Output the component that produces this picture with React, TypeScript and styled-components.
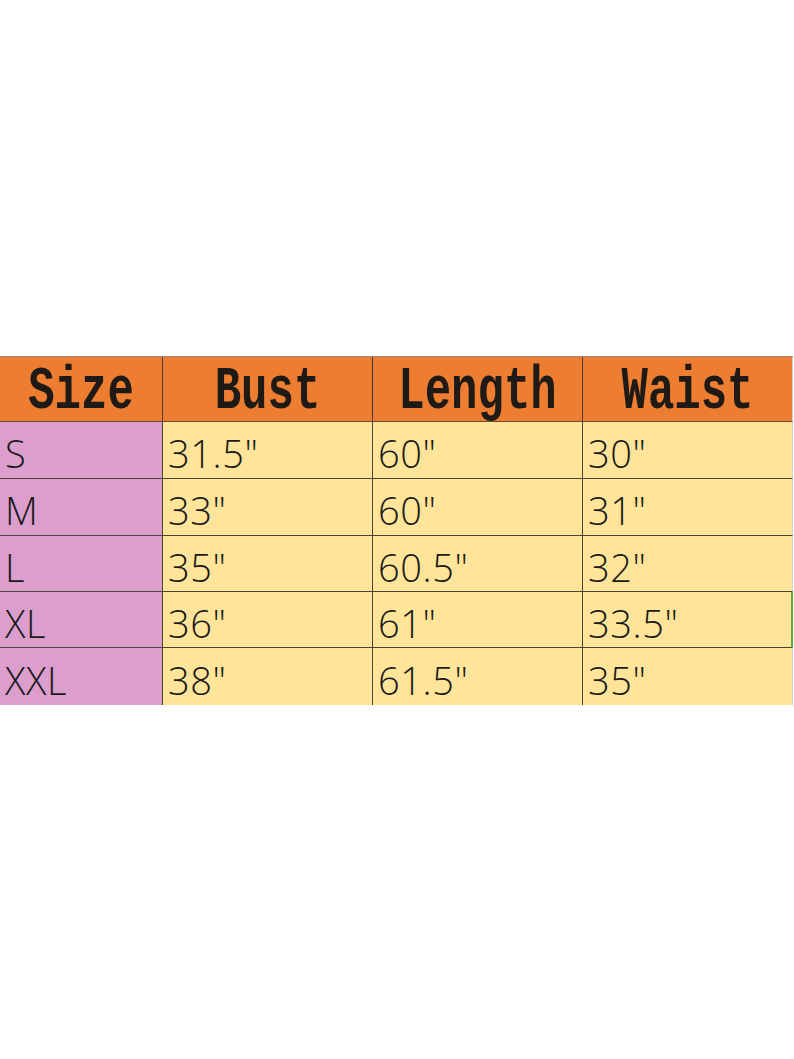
import React from 'react';
import styled, { createGlobalStyle } from 'styled-components';

const GlobalStyle = createGlobalStyle`
    html, body {
        margin: 0;
        padding: 0;
        background: #ffffff;
    }
`

const columns = ['Size', 'Bust', 'Length', 'Waist'];

const rows = [
    { size: 'S', bust: '31.5"', length: '60"', waist: '30"' },
    { size: 'M', bust: '33"', length: '60"', waist: '31"' },
    { size: 'L', bust: '35"', length: '60.5"', waist: '32"' },
    { size: 'XL', bust: '36"', length: '61"', waist: '33.5"', selected: true },
    { size: 'XXL', bust: '38"', length: '61.5"', waist: '35"' },
];

const rowHeights = [57, 57, 56, 56, 57];

export default function App() {
    return (
        <>
            <GlobalStyle/>
            <Page>
                <Chart>
                    {columns.map((c, i) => (
                        <HeadCell key={c} $last={i === columns.length - 1}>
                            <HeadLabel>{c}</HeadLabel>
                        </HeadCell>
                    ))}
                    {rows.map((r, ri) => {
                        const values = [r.size, r.bust, r.length, r.waist];
                        return values.map((v, ci) => (
                            <Cell
                                key={ri + '-' + ci}
                                $size={ci === 0}
                                $last={ci === values.length - 1}
                                $selected={!!r.selected && ci === values.length - 1}
                                $bottom={ri === rows.length - 1}
                                style={{ height: rowHeights[ri] }}
                            >
                                <Value>{v}</Value>
                            </Cell>
                        ));
                    })}
                </Chart>
            </Page>
        </>
    );
}

const Page = styled.div`
    width: 794px;
    height: 1059px;
    padding-top: 356px;
    box-sizing: border-box;
`

const Chart = styled.div`
    display: grid;
    grid-template-columns: 163px 210px 210px 210px;
    width: 793px;
    border-top: 1px solid #9a8a80;
`

const HeadCell = styled.div<{ $last?: boolean }>`
    height: 64px;
    background: #ed7d31;
    border-right: 1px solid ${p => p.$last ? '#d9d0c8' : '#4a3a30'};
    border-bottom: 1px solid #6a4a30;
    display: flex;
    align-items: center;
    justify-content: center;
`

const HeadLabel = styled.span`
    display: inline-block;
    font: bold 44px "Liberation Mono", "Courier New", monospace;
    color: #1f1a16;
    transform: scaleY(1.4);
    line-height: 1;
    margin-top: 4px;
`

const Cell = styled.div<{ $size?: boolean; $last?: boolean; $selected?: boolean; $bottom?: boolean }>`
    box-sizing: border-box;
    background: ${p => p.$size ? '#dc9fcd' : '#ffe499'};
    border-right: ${p => p.$selected ? '2px solid #62a83a' : p.$last ? '1px solid #d9d0c8' : '1px solid #4a4436'};
    border-bottom: ${p => p.$bottom ? 'none' : '1px solid #4a4436'};
    display: flex;
    align-items: center;
    padding: 6px 0 0 5px;
`

const Value = styled.span`
    display: inline-block;
    font: 300 38px "Open Sans", "Lato", "DejaVu Sans", sans-serif;
    color: #1a1a1a;
    letter-spacing: 0.6px;
    line-height: 1;
`
